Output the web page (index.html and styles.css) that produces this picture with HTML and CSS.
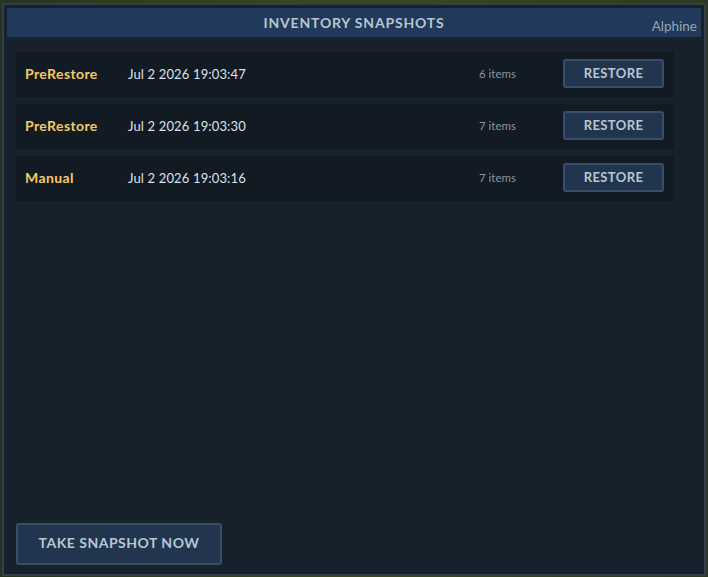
FILE: index.html
```html
<!DOCTYPE html>
<html lang="en">
<head>
    <meta charset="UTF-8">
    <meta name="viewport" content="width=device-width, initial-scale=1.0">
    <title>Inventory Snapshots</title>
    <link rel="stylesheet" href="styles.css">
</head>
<body>
    <div class="panel">
        <div class="header">
            <h1>INVENTORY SNAPSHOTS</h1>
        </div>
        <span class="player">Alphine</span>

        <div class="list">
            <div class="row">
                <span class="kind">PreRestore</span>
                <span class="date">Jul 2 2026 19:03:47</span>
                <span class="count">6 items</span>
                <button class="btn">RESTORE</button>
            </div>
            <div class="row">
                <span class="kind">PreRestore</span>
                <span class="date">Jul 2 2026 19:03:30</span>
                <span class="count">7 items</span>
                <button class="btn">RESTORE</button>
            </div>
            <div class="row">
                <span class="kind">Manual</span>
                <span class="date">Jul 2 2026 19:03:16</span>
                <span class="count">7 items</span>
                <button class="btn">RESTORE</button>
            </div>
        </div>

        <div class="footer">
            <button class="btn btn-big">TAKE SNAPSHOT NOW</button>
        </div>
    </div>
</body>
</html>
```

FILE: styles.css
```css
/* General Styling */
* {
    box-sizing: border-box;
}

body {
    margin: 0;
    padding: 3px 0 0 2px;
    height: 577px;
    overflow: hidden;
    font-family: 'Lato', 'Noto Sans', sans-serif;
    background: linear-gradient(90deg, #26361c, #3d4a1e 50%, #2c3a20);
}

.panel {
    position: relative;
    width: 704px;
    height: 573px;
    display: flex;
    flex-direction: column;
    padding: 3px;
    background: #17212c;
    border: 2px solid #343d4f;
}

.header {
    height: 29px;
    display: flex;
    align-items: center;
    justify-content: center;
    background: #21395a;
}

.header h1 {
    margin: 0;
    font-size: 14px;
    font-weight: 700;
    letter-spacing: 0.8px;
    color: #b8c5d1;
}

.player {
    position: absolute;
    top: 13px;
    right: 7px;
    font-size: 13.5px;
    color: #95a4b5;
}

.list {
    flex: 1;
    display: flex;
    flex-direction: column;
    gap: 7px;
    padding: 15px 27px 0 9px;
}

.row {
    height: 45px;
    display: flex;
    align-items: center;
    padding: 0 10px 2px 9px;
    background: #121a24;
}

.kind {
    width: 103px;
    font-size: 14px;
    font-weight: 700;
    letter-spacing: 0.4px;
    color: #f4ca64;
}

.date {
    flex: 1;
    font-size: 13px;
    letter-spacing: 0.15px;
    color: #dce2e8;
}

.count {
    width: 84px;
    font-size: 11.5px;
    color: #8995a2;
}

.btn {
    width: 101px;
    height: 29px;
    padding: 0 0 1px;
    font-family: inherit;
    font-size: 13px;
    font-weight: 700;
    letter-spacing: 0.4px;
    color: #b9c6d3;
    background: #22354f;
    border: 2px solid #3a4e6b;
    border-radius: 3px;
    cursor: pointer;
}

.footer {
    padding: 0 0 6px 9px;
}

.btn-big {
    width: 206px;
    height: 42px;
    padding-bottom: 3px;
    font-size: 14px;
    letter-spacing: 0.5px;
}
```
